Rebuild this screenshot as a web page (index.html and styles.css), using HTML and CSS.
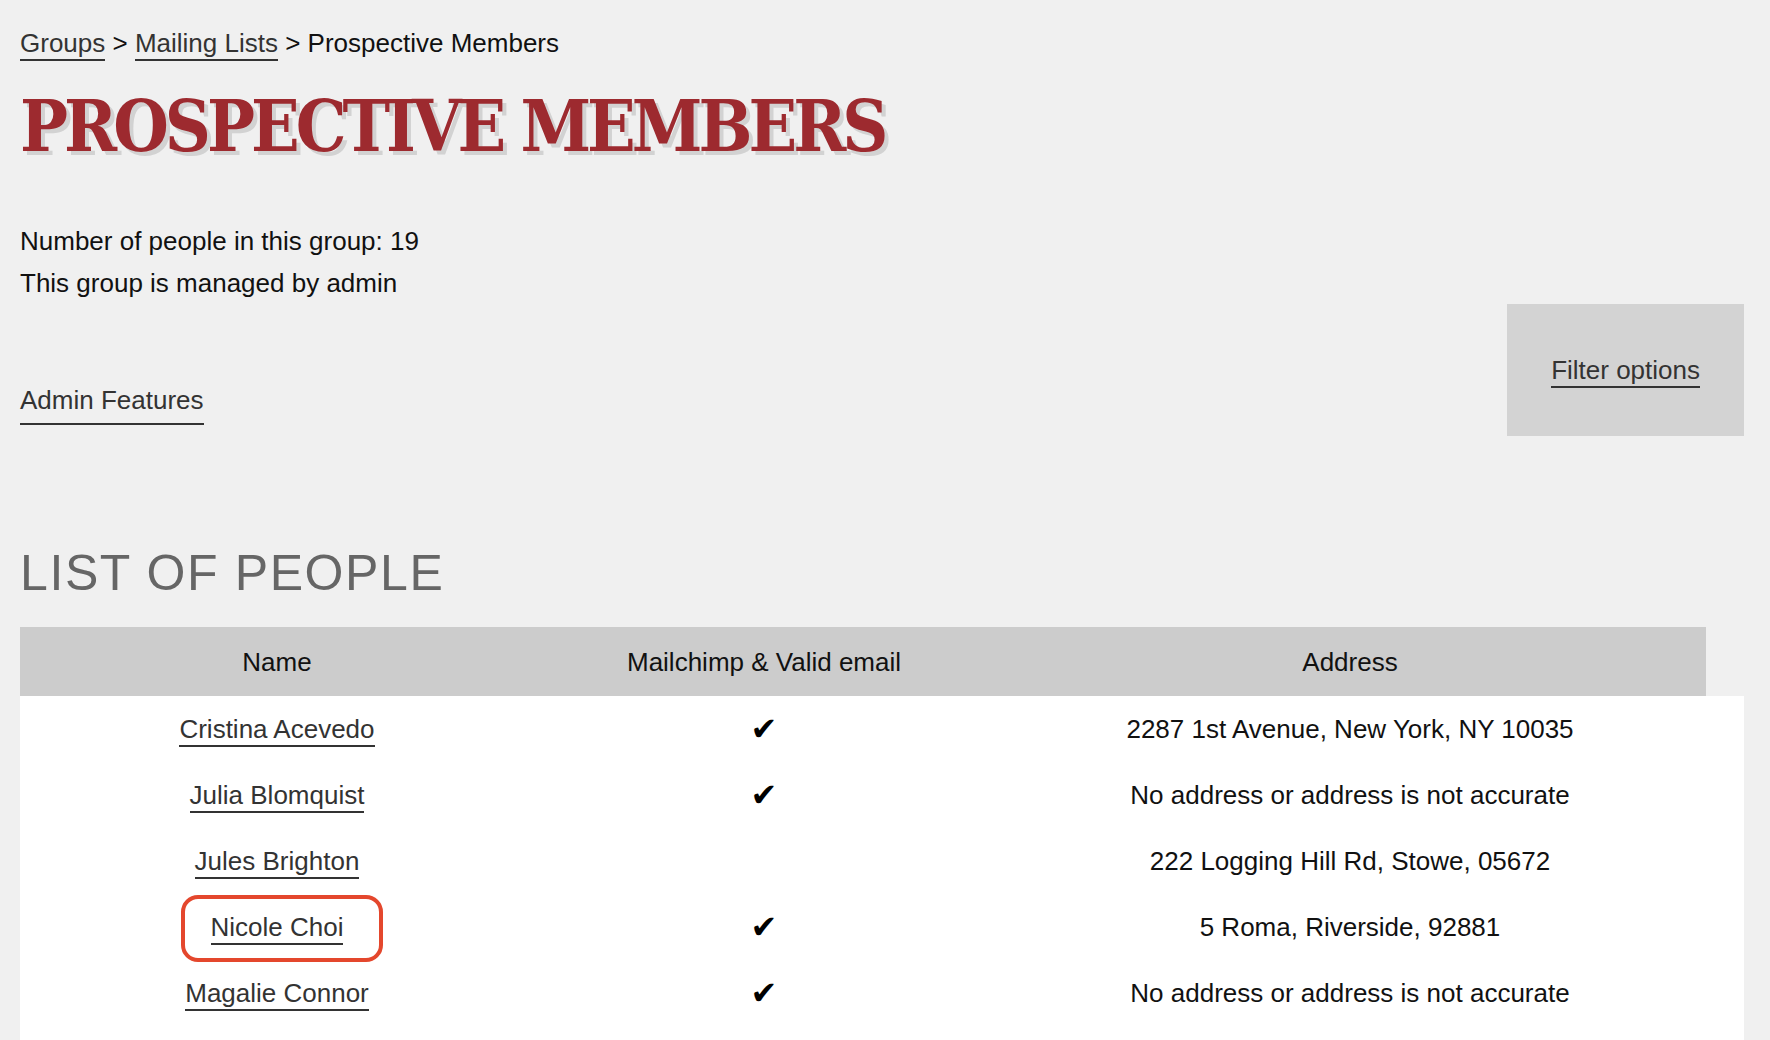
FILE: index.html
```html
<!DOCTYPE html>
<html>
<head>
    <title>Prospective Members</title>
    <link rel="stylesheet" href="styles.css">
</head>
<body>
    <div class="breadcrumb">
        <a href="#">Groups</a> &gt; <a href="#">Mailing Lists</a> &gt; Prospective Members
    </div>

    <h1 class="page-title">Prospective Members</h1>

    <div class="group-info">
        <p>Number of people in this group: 19</p>
        <p>This group is managed by admin</p>
    </div>

    <div class="actions">
        <a href="#" class="admin-link">Admin Features</a>
        <div class="filter-box">
            <a href="#">Filter options</a>
        </div>
    </div>

    <h2 class="section-title">List of People</h2>

    <div class="people">
        <div class="people-head">
            <div>Name</div>
            <div>Mailchimp &amp; Valid email</div>
            <div>Address</div>
        </div>
        <div class="people-body">
            <div class="person">
                <div><a href="#">Cristina Acevedo</a></div>
                <div class="check">&#10004;</div>
                <div>2287 1st Avenue, New York, NY 10035</div>
            </div>
            <div class="person">
                <div><a href="#">Julia Blomquist</a></div>
                <div class="check">&#10004;</div>
                <div>No address or address is not accurate</div>
            </div>
            <div class="person">
                <div><a href="#">Jules Brighton</a></div>
                <div class="check"></div>
                <div>222 Logging Hill Rd, Stowe, 05672</div>
            </div>
            <div class="person">
                <div><a href="#" class="marked">Nicole Choi</a></div>
                <div class="check">&#10004;</div>
                <div>5 Roma, Riverside, 92881</div>
            </div>
            <div class="person">
                <div><a href="#">Magalie Connor</a></div>
                <div class="check">&#10004;</div>
                <div>No address or address is not accurate</div>
            </div>
        </div>
    </div>
</body>
</html>
```

FILE: styles.css
```css
body {
    margin: 0;
    padding: 22px 26px 0 20px;
    background-color: #f0f0f0;
    font-family: "Liberation Sans", Arial, sans-serif;
    font-size: 26px;
    line-height: 42px;
    color: #111;
}

a {
    color: #333;
    text-decoration: none;
    border-bottom: 2px solid #333;
    padding-bottom: 1px;
}

p {
    margin: 0;
}

.page-title {
    margin: 27px 0 0 0;
    font-family: "DejaVu Serif", serif;
    font-stretch: condensed;
    font-weight: bold;
    font-size: 71px;
    line-height: 71px;
    letter-spacing: -4px;
    text-transform: uppercase;
    color: #9d2a2f;
    text-shadow: 4px 4px 0 #d2d2d2;
}

.group-info {
    margin-top: 58px;
}

.actions {
    display: flex;
    justify-content: space-between;
    align-items: flex-end;
}

.admin-link {
    margin-bottom: 11px;
    padding-bottom: 2px;
}

.filter-box {
    background-color: #d3d3d3;
    padding: 45px 44px;
}

.section-title {
    margin: 107px 0 0 0;
    font-size: 50px;
    line-height: 60px;
    font-weight: normal;
    letter-spacing: 1.6px;
    text-transform: uppercase;
    color: #666;
}

.people {
    margin-top: 24px;
}

.people-head,
.person {
    display: grid;
    grid-template-columns: 514fr 460fr 712fr;
    align-items: center;
    text-align: center;
    margin-right: 38px;
}

.people-head {
    height: 69px;
    background-color: #cccccc;
}

.people-body {
    background-color: #fff;
    padding-bottom: 30px;
}

.person {
    height: 66px;
}

.check {
    font-family: "DejaVu Sans", sans-serif;
    font-size: 32px;
    color: #000;
}

/* red outline round the selected person */
.marked {
    position: relative;
}

.marked::after {
    content: "";
    position: absolute;
    top: -17px;
    bottom: -19px;
    left: -30px;
    right: -40px;
    border: 4px solid #e4472d;
    border-radius: 17px;
}
```
